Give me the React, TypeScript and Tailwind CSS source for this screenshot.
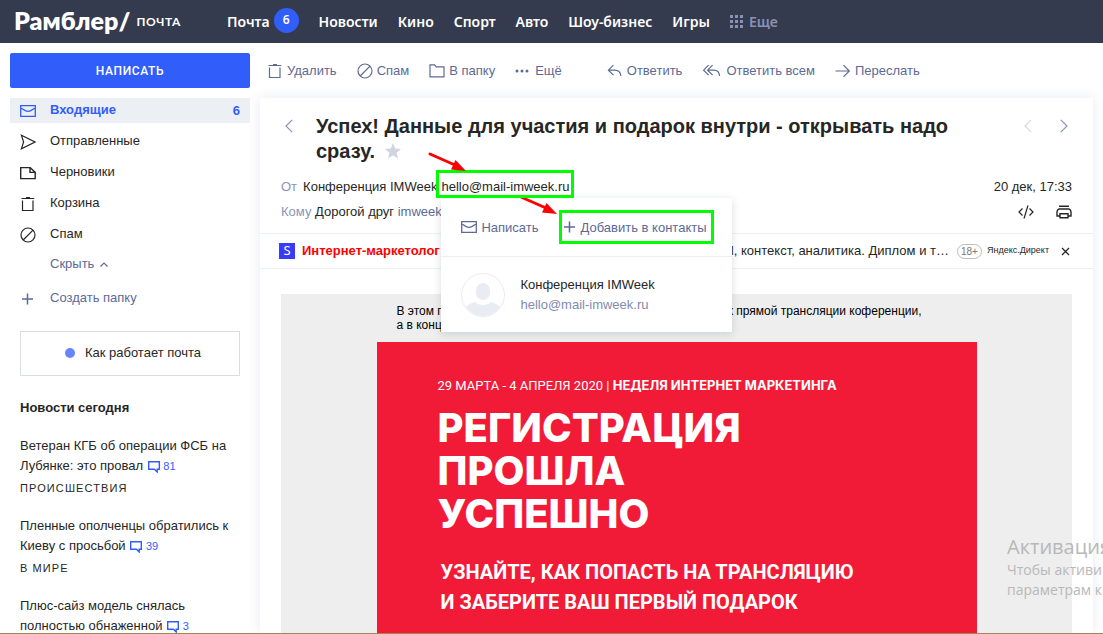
import type { ReactNode } from "react";

const navLinks = ["Новости", "Кино", "Спорт", "Авто", "Шоу-бизнес", "Игры"];

type IconProps = { children: ReactNode; className?: string; size?: number };

function Icon({ children, className = "", size = 16 }: IconProps) {
  return (
    <svg
      width={size}
      height={size}
      viewBox="0 0 16 16"
      fill="none"
      stroke="currentColor"
      strokeWidth="1.2"
      aria-hidden="true"
      className={`shrink-0 ${className}`}
    >
      {children}
    </svg>
  );
}

const MailIcon = () => (
  <Icon>
    <path strokeWidth="1.3" d="M.7 2.6h14.6v10.8H.7zM1.300 5.200l4 2.400c2 1.100 3.400 1.100 5.400 0l4-2.400" />
  </Icon>
);
const SendIcon = () => (
  <Icon>
    <path d="M1.4 1.2 15 8 1.4 14.8 3.6 8z" />
  </Icon>
);
const DraftIcon = () => (
  <Icon>
    <path strokeWidth="1.4" d="M.7 2.6h9.500L15.200 7.400v6.200H.7zM10 2.6V7.4h5" />
  </Icon>
);
const TrashIcon = () => (
  <Icon>
    <path d="M1.500 2.5h12.800M6 1.500h4M2.500 4.4v10.100h10.500V4.4" />
  </Icon>
);
const BanIcon = () => (
  <Icon>
    <circle cx="8" cy="8" r="7" />
    <path d="M3.2 13 13 3.2" />
  </Icon>
);
const FolderIcon = () => (
  <Icon>
    <path d="M1 13.9V1.9h4.6l1.6 1.9H15v10.1z" />
  </Icon>
);
const DotsIcon = () => (
  <Icon>
    <g fill="currentColor" stroke="none">
      <circle cx="2" cy="8" r="1.5" />
      <circle cx="7" cy="8" r="1.5" />
      <circle cx="12" cy="8" r="1.5" />
    </g>
  </Icon>
);
const ReplyIcon = () => (
  <Icon>
    <path d="M6.4 2.2 1.4 7.2l5 5M1.4 7.2h6.4c3.6 0 5.6 2.2 6.1 5.8" />
  </Icon>
);
const ReplyAllIcon = () => (
  <svg width="20" height="16" viewBox="0 0 20 16" fill="none" stroke="currentColor" strokeWidth="1.2" aria-hidden="true">
    <path d="M6.600 2.2 1.600 7.2l5 5M10.600 2.2 5.600 7.2l5 5M5.600 7.2h6.4c3.2 0 5.2 2.2 5.6 5.8" />
  </svg>
);
const ForwardIcon = () => (
  <Icon>
    <path d="M.5 8h13.600M8.500 2.2 14.3 8 8.500 13.8" />
  </Icon>
);
const PlusIcon = () => (
  <Icon>
    <path strokeWidth="1.5" d="M2 8h11M7.500 2.500v11" />
  </Icon>
);
const ChevronLeft = () => (
  <Icon>
    <path d="M11.2 1.8 5 8l6.2 6.2" />
  </Icon>
);
const ChevronRight = () => (
  <Icon>
    <path d="M4.8 1.8 11 8l-6.2 6.2" />
  </Icon>
);

const folders = [
  { name: "Отправленные", icon: <SendIcon /> },
  { name: "Черновики", icon: <DraftIcon /> },
  { name: "Корзина", icon: <TrashIcon /> },
  { name: "Спам", icon: <BanIcon /> },
];

const news = [
  { text: "Ветеран КГБ об операции ФСБ на Лубянке: это провал", count: 81, topic: "ПРОИСШЕСТВИЯ" },
  { text: "Пленные ополченцы обратились к Киеву с просьбой", count: 39, topic: "В МИРЕ" },
  { text: "Плюс-сайз модель снялась полностью обнаженной", count: 3, topic: "" },
];

function Header() {
  return (
    <header className="flex h-[43px] shrink-0 items-center bg-[#353b4e] text-white">
      <a href="#" className="flex w-[227px] items-center gap-1.5 pl-3.5 font-['Lato',sans-serif]">
        <span className="pb-1 text-[25px] leading-[36px] font-extrabold">Рамблер/</span>
        <span className="text-xs font-bold tracking-wider">ПОЧТА</span>
      </a>
      <nav className="flex items-center gap-5 font-['Noto_Sans',sans-serif] text-sm font-semibold">
        <a href="#" className="flex items-center gap-1">
          Почта
          <span className="mb-[3px] flex size-[25px] items-center justify-center rounded-full bg-[#315efb] text-xs">6</span>
        </a>
        {navLinks.map((link) => (
          <a key={link} href="#">
            {link}
          </a>
        ))}
        <button type="button" className="flex items-center gap-1.5 text-[#8991b4]">
          <svg width="13" height="13" viewBox="0 0 13 13" fill="currentColor" aria-hidden="true">
            {[0, 5, 10].map((y) => [0, 5, 10].map((x) => <rect key={`${x}-${y}`} x={x} y={y} width="3" height="3" />))}
          </svg>
          Еще
        </button>
      </nav>
    </header>
  );
}

function Sidebar() {
  return (
    <aside className="w-[260px] shrink-0 px-2.5 pt-2.5 text-[13px] text-[#262626]">
      <button
        type="button"
        className="h-[35px] w-full rounded-xs bg-[#315efb] font-['Roboto',sans-serif] text-xs font-medium tracking-wider text-white"
      >
        НАПИСАТЬ
      </button>
      <a href="#" className="mt-2.5 flex h-[25px] items-center gap-[14px] bg-[#eceff4] px-2.5 font-bold text-[#315efb]">
        <MailIcon />
        <span className="grow pb-0.5">Входящие</span>
        <span>6</span>
      </a>
      <ul>
        {folders.map((f) => (
          <li key={f.name}>
            <a href="#" className="mt-1.5 flex h-[25px] items-center gap-[14px] px-2.5">
              {f.icon}
              <span className="pb-0.5">{f.name}</span>
            </a>
          </li>
        ))}
      </ul>
      <button type="button" className="mt-[7px] ml-10 flex h-5 items-center gap-1.5 text-[#5d6a96]">
        Скрыть
        <svg width="8" height="5" viewBox="0 0 8 5" fill="none" stroke="currentColor" strokeWidth="1.2" aria-hidden="true">
          <path d="M.5 4.5 4 1l3.5 3.5" />
        </svg>
      </button>
      <button type="button" className="mt-3 ml-2.5 flex h-[25px] items-center gap-[14px] text-[#5d6a96]">
        <PlusIcon />
        <span className="pb-0.5">Создать папку</span>
      </button>
      <a
        href="#"
        className="mx-2.5 mt-5 flex h-[45px] items-center justify-center gap-2.5 border border-[#dadce8] pb-0.5 pl-1.5"
      >
        <span className="size-2.5 rounded-full bg-[#6485fc]" />
        Как работает почта
      </a>
      <section className="px-2.5 pt-[22px]">
        <h2 className="leading-5 font-bold">Новости сегодня</h2>
        {news.map((n) => (
          <article key={n.text} className="mt-[18px] pr-1">
            <a href="#" className="block leading-5">
              {n.text}{" "}
              <svg
                width="12"
                height="12"
                viewBox="0 0 12 12"
                fill="none"
                stroke="#315efb"
                strokeWidth="1.4"
                aria-hidden="true"
                className="ml-px inline align-middle"
              >
                <path d="M.7.7h10.6v7.500H9.200V11L6.500 8.200H.7z" />
              </svg>{" "}
              <span className="text-[11px] text-[#315efb]">{n.count}</span>
            </a>
            <p className="pt-[3px] pb-px text-[11px] leading-[18px] tracking-widest">{n.topic}</p>
          </article>
        ))}
      </section>
    </aside>
  );
}

function ToolButton({ icon, label }: { icon: ReactNode; label: string }) {
  return (
    <button type="button" className="flex items-center gap-1">
      {icon}
      {label}
    </button>
  );
}

function Toolbar() {
  return (
    <div className="flex h-[55px] shrink-0 items-center gap-5 pl-[7px] text-[13px] text-[#5d6a96]">
      <ToolButton icon={<TrashIcon />} label="Удалить" />
      <ToolButton icon={<BanIcon />} label="Спам" />
      <ToolButton icon={<FolderIcon />} label="В папку" />
      <ToolButton icon={<DotsIcon />} label="Ещё" />
      <div className="ml-[25px] flex gap-5">
        <ToolButton icon={<ReplyIcon />} label="Ответить" />
        <ToolButton icon={<ReplyAllIcon />} label="Ответить всем" />
        <ToolButton icon={<ForwardIcon />} label="Переслать" />
      </div>
    </div>
  );
}

function Arrow({ className }: { className: string }) {
  return (
    <svg width="40" height="22" viewBox="0 0 40 22" aria-hidden="true" className={`absolute ${className}`}>
      <path d="M2 2 28 13.500" stroke="#fe0000" strokeWidth="3" strokeLinecap="round" />
      <path d="M38 19 23 17.500 27.500 8z" fill="#fe0000" />
    </svg>
  );
}

function ContactPopup() {
  return (
    <div className="absolute top-6 left-0 z-10 w-[291px] bg-white whitespace-nowrap shadow-[0_2px_8px_rgba(52,59,76,0.18)]">
      <div className="flex h-[59px] items-center border-b border-[#eceff6] pl-5 text-[#5d6a96]">
        <button type="button" className="flex items-center gap-1">
          <MailIcon />
          Написать
        </button>
        <button
          type="button"
          className="ml-5 flex h-[34px] items-center gap-[3px] border-3 border-[#00fe00] pr-1"
        >
          <PlusIcon />
          Добавить в контакты
        </button>
      </div>
      <div className="flex h-[75px] items-center gap-[15px] pl-5">
        <svg width="44" height="44" viewBox="0 0 44 44" aria-hidden="true">
          <clipPath id="face">
            <circle cx="22" cy="22" r="21" />
          </clipPath>
          <circle cx="22" cy="22" r="21.500" fill="#fff" stroke="#e8ebf2" />
          <g clipPath="url(#face)" fill="#e9edf3">
            <rect x="15" y="10" width="14" height="17" rx="7" />
            <path d="M3 36c2-3 7-6 11-7 4 4 12 4 16 0 4 1 9 4 11 7v10H3z" />
          </g>
        </svg>
        <div className="leading-5">
          <p>Конференция IMWeek</p>
          <p className="text-[#7f8bb0]">hello@mail-imweek.ru</p>
        </div>
      </div>
      <Arrow className="-top-[3px] left-[78px]" />
    </div>
  );
}

function MessageHeader() {
  return (
    <div className="px-[21px] pt-4">
      <div className="flex items-start">
        <button type="button" aria-label="Назад" className="mt-1 w-[35px] text-[#8a94b8]">
          <ChevronLeft />
        </button>
        <h1 className="flex-1 pr-16 text-[20px] leading-[25px] font-bold">
          Успех! Данные для участия и подарок внутри - открывать надо сразу.{" "}
          <svg width="16" height="16" viewBox="0 0 16 16" fill="#cfd3e2" aria-hidden="true" className="mb-1 ml-1 inline">
            <path d="m8 0 2.200 5.400L16 6l-4.500 3.700L13 15.500 8 12.300 3 15.500l1.500-5.800L0 6l5.800-.6z" />
          </svg>
        </h1>
        <div className="mt-1 flex gap-5 text-[#8a94b8]">
          <button type="button" aria-label="Предыдущее" className="text-[#d5d9e6]">
            <ChevronLeft />
          </button>
          <button type="button" aria-label="Следующее">
            <ChevronRight />
          </button>
        </div>
      </div>
      <div className="mt-2.5 flex items-start justify-between text-[13px] leading-[25px]">
        <div>
          <p className="flex">
            <span className="mr-1.5 text-[#8a94b8]">От</span>
            <span className="mr-1">Конференция IMWeek</span>
            <span className="relative">
              <ContactPopup />
              <a href="#">hello@mail-imweek.ru</a>
              <span className="absolute -top-1 -right-1 -left-[5px] z-20 h-7 border-3 border-[#00fe00]" />
              <Arrow className="-top-[22px] -left-[13px] z-20" />
            </span>
          </p>
          <p>
            <span className="text-[#8a94b8]">Кому</span> Дорогой друг <span className="text-[#5d6a96]">imweek</span>
          </p>
        </div>
        <div className="flex flex-col items-end">
          <time>20 дек, 17:33</time>
          <div className="flex h-[25px] items-center gap-[22px]">
            <button type="button" aria-label="Исходный код">
              <Icon>
                <path d="M4.500 4.500 1 8l3.500 3.500M11.500 4.500 15 8l-3.500 3.500M10 1.500 6 14.500" />
              </Icon>
            </button>
            <button type="button" aria-label="Печать">
              <Icon>
                <path strokeWidth="1.400" d="M3 2.200h10M4 12H1V8a3 3 0 0 1 2-3h10a3 3 0 0 1 2 3v4h-3M4 9.800h8v4H4z" />
              </Icon>
            </button>
          </div>
        </div>
      </div>
    </div>
  );
}

function AdRow() {
  return (
    <div className="mt-[9px] flex h-9 items-center border-y border-[#eceff6] pr-[23px] pl-[19px] text-[13px]">
      <span className="flex size-4 items-center justify-center bg-[#3a3afc] font-['Noto_Sans',sans-serif] text-white">S</span>
      <a href="#" className="ml-[7px] grow font-bold text-[#fe0000]">
        Интернет-маркетолог
      </a>
      <span>И, контекст, аналитика. Диплом и т…</span>
      <span className="ml-2 rounded-full border border-[#bbb] px-[3px] text-[10px] leading-[13px] text-[#777]">18+</span>
      <span className="ml-[5px] text-[9px]">Яндекс.Директ</span>
      <button type="button" aria-label="Закрыть" className="ml-3">
        <svg width="9" height="9" viewBox="0 0 9 9" stroke="currentColor" strokeWidth="1.300" aria-hidden="true">
          <path d="m1 1 7 7M8 1 1 8" />
        </svg>
      </button>
    </div>
  );
}

function LetterBody() {
  return (
    <div className="mx-[21px] mt-[25px] flex grow flex-col items-center bg-[#eee]">
      <div className="w-[600px] pt-2.5 pr-[55px] pb-2.5 pl-5 text-xs leading-[14px] text-black">
        <p className="flex justify-between">
          <span>В этом п</span>
          <span>к прямой трансляции коференции,</span>
        </p>
        <p>а в конц</p>
      </div>
      <div className="w-[600px] grow bg-[#f21b37] pl-[61px] text-white">
        <p className="pt-[33px] font-['Roboto',sans-serif] text-[13px] leading-5">
          29 МАРТА - 4 АПРЕЛЯ 2020 | <b className="font-['Inter',sans-serif]">НЕДЕЛЯ ИНТЕРНЕТ МАРКЕТИНГА</b>
        </p>
        <h2 className="pt-2.5 font-['Inter',sans-serif] text-[40px] leading-[43px] font-extrabold">
          РЕГИСТРАЦИЯ
          <br />
          ПРОШЛА
          <br />
          УСПЕШНО
        </h2>
        <p className="pt-[22px] pl-[3px] font-['Roboto',sans-serif] text-[20px] leading-[30px] font-bold">
          УЗНАЙТЕ, КАК ПОПАСТЬ НА ТРАНСЛЯЦИЮ
          <br />И ЗАБЕРИТЕ ВАШ ПЕРВЫЙ ПОДАРОК
        </p>
      </div>
    </div>
  );
}

export default function App() {
  return (
    <div className="relative flex h-screen flex-col overflow-hidden border-b border-[#a08850] bg-white font-['Liberation_Sans',sans-serif] text-[#262626]">
      <Header />
      <div className="flex min-h-0 grow">
        <Sidebar />
        <main className="mr-2.5 flex min-w-0 grow flex-col">
          <Toolbar />
          <article className="flex grow flex-col bg-white shadow-[0_0_12px_rgba(53,70,120,0.12)]">
            <MessageHeader />
            <AdRow />
            <LetterBody />
          </article>
        </main>
      </div>
      <div className="absolute right-0 bottom-[33px] w-24 overflow-hidden font-['Open_Sans',sans-serif] text-sm leading-5 whitespace-nowrap text-[#b8b8b8]">
        <p className="text-[20px] leading-[26px]">Активация</p>
        <p>Чтобы активи</p>
        <p>параметрам к</p>
      </div>
    </div>
  );
}
